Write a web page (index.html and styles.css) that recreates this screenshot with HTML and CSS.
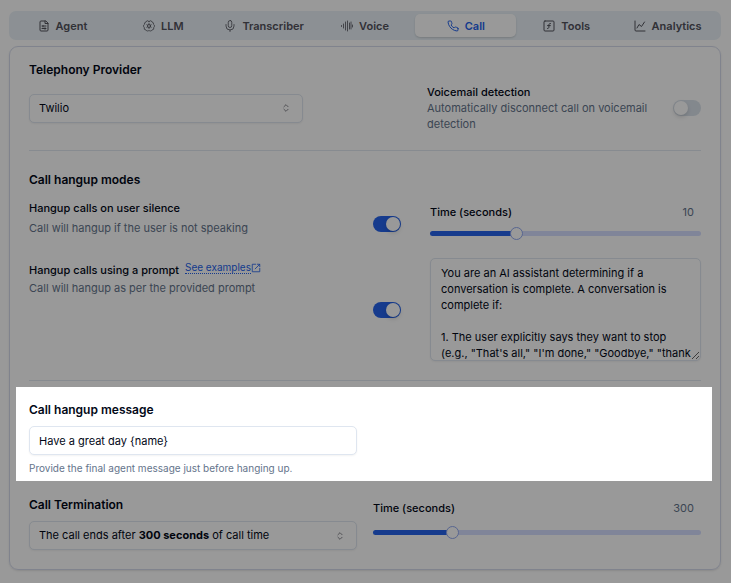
FILE: index.html
```html
<!DOCTYPE html>
<html lang="en">
<head>
    <meta charset="UTF-8">
    <meta name="viewport" content="width=device-width, initial-scale=1.0">
    <title>Agent setup - Call</title>
    <link rel="stylesheet" href="styles.css">
</head>
<body>
<!-- Tabs -->
<nav class="tabs">
    <a class="tab" href="#agent">
        <svg class="icon" viewBox="0 0 24 24"><path d="M15 2H6a2 2 0 0 0-2 2v16a2 2 0 0 0 2 2h12a2 2 0 0 0 2-2V7z"/><path d="M14 2v5h6M8 12h8M10 11v3M8 17h8M14 15.500v3"/></svg>
        Agent
    </a>
    <a class="tab" href="#llm">
        <svg class="icon fine" viewBox="0 0 24 24"><circle cx="12" cy="12" r="3"/><path d="M12 3.500a3 3 0 0 0-5.800.4A4 4 0 0 0 3 8.500 4 4 0 0 0 2.500 15 4 4 0 0 0 6 20a3.500 3.500 0 0 0 6 .5 3.500 3.500 0 0 0 6-.5 4 4 0 0 0 3.500-5 4 4 0 0 0-.5-6.500 4 4 0 0 0-3.200-4.600 3 3 0 0 0-5.800-.4M12 7v2M12 15v2M7.700 9.500l1.700 1M14.600 13.500l1.700 1M7.700 14.500l1.700-1M14.600 10.500l1.700-1"/></svg>
        LLM
    </a>
    <a class="tab" href="#transcriber">
        <svg class="icon fine" viewBox="0 0 24 24"><rect x="8.500" y="1" width="7" height="14" rx="3.500"/><path d="M4 9v3a8 8 0 0 0 16 0V9M12 20v3"/></svg>
        Transcriber
    </a>
    <a class="tab" href="#voice">
        <svg class="icon fine" viewBox="0 0 24 24"><path d="M1 11v2M5 8v8M9 4v16M13 2v20M17 6v12M20 4v14M23 10v4"/></svg>
        Voice
    </a>
    <a class="tab active" href="#call" aria-current="page">
        <svg class="icon" viewBox="0 0 24 24"><path d="M22 16.920v3a2 2 0 0 1-2.180 2 19.790 19.790 0 0 1-8.630-3.070 19.500 19.500 0 0 1-6-6 19.790 19.790 0 0 1-3.070-8.670A2 2 0 0 1 4.110 2h3a2 2 0 0 1 2 1.720 12.840 12.840 0 0 0 .7 2.810 2 2 0 0 1-.45 2.110L8.090 9.910a16 16 0 0 0 6 6l1.270-1.270a2 2 0 0 1 2.110-.45 12.840 12.840 0 0 0 2.810.7A2 2 0 0 1 22 16.920z"/></svg>
        Call
    </a>
    <a class="tab" href="#tools">
        <svg class="icon" viewBox="0 0 24 24"><rect x="2" y="2" width="20" height="20" rx="2"/><path d="M9 17c2 0 2.800-1 2.800-2.800V10c0-2 1-3.300 3.200-3M9 11.200h5.700"/></svg>
        Tools
    </a>
    <a class="tab" href="#analytics">
        <svg class="icon" viewBox="0 0 24 24"><path d="M2 2v18a2 2 0 0 0 2 2h18M6 16l4-7 5 4 6-9"/></svg>
        Analytics
    </a>
</nav>

<main class="card">
    <!-- Telephony provider -->
    <section>
        <h2><label for="provider">Telephony Provider</label></h2>
        <div class="provider-row">
            <div class="select-box">
                <select id="provider">
                    <option>Twilio</option>
                </select>
                <svg class="chevrons" viewBox="0 0 24 24"><path d="M7 9l5-5 5 5M7 15l5 5 5-5"/></svg>
            </div>
            <div class="voicemail">
                <label for="voicemail">
                    <span class="title">Voicemail detection</span>
                    <span class="desc">Automatically disconnect call on voicemail detection</span>
                </label>
                <input class="switch" type="checkbox" role="switch" id="voicemail">
            </div>
        </div>
    </section>

    <hr>

    <!-- Hangup modes -->
    <section class="modes">
        <h2>Call hangup modes</h2>
        <div class="mode">
            <div class="mode-text">
                <label class="title" for="silence">Hangup calls on user silence</label>
                <p class="desc">Call will hangup if the user is not speaking</p>
            </div>
            <div class="mode-control">
                <input class="switch" type="checkbox" role="switch" id="silence" checked>
                <div class="slider">
                    <div class="slider-head">
                        <label class="title" for="silence-time">Time (seconds)</label>
                        <output for="silence-time">10</output>
                    </div>
                    <input type="range" id="silence-time" min="1" max="30" value="10" style="--fill: 32%">
                </div>
            </div>
        </div>
        <div class="mode">
            <div class="mode-text prompt-text">
                <div class="title-row">
                    <label class="title" for="prompt-switch">Hangup calls using a prompt</label>
                    <a class="examples" href="#examples"><span>See examples</span><svg viewBox="0 0 24 24"><path d="M11 3H3v18h18v-8M15 3h6v6M10 14L21 3"/></svg></a>
                </div>
                <p class="desc">Call will hangup as per the provided prompt</p>
            </div>
            <div class="mode-control">
                <input class="switch" type="checkbox" role="switch" id="prompt-switch" checked>
                <textarea aria-label="Hangup prompt">You are an AI assistant determining if a conversation is complete. A conversation is complete if:

1. The user explicitly says they want to stop
(e.g., "That's all," "I'm done," "Goodbye," "thank you").</textarea>
            </div>
        </div>
    </section>

    <hr>

    <!-- Hangup message, dims everything around it -->
    <section class="spotlight">
        <h2><label for="message">Call hangup message</label></h2>
        <div class="columns">
            <input type="text" id="message" value="Have a great day {name}">
        </div>
        <p class="help">Provide the final agent message just before hanging up.</p>
    </section>

    <!-- Termination -->
    <section class="columns termination">
        <div>
            <h2><label for="termination">Call Termination</label></h2>
            <div class="select-box">
                <select id="termination" class="rich">
                    <button><selectedcontent></selectedcontent></button>
                    <option>The call ends after <b>300 seconds</b> of call time</option>
                </select>
                <svg class="chevrons" viewBox="0 0 24 24"><path d="M7 9l5-5 5 5M7 15l5 5 5-5"/></svg>
            </div>
        </div>
        <div class="slider">
            <div class="slider-head">
                <label class="title" for="end-time">Time (seconds)</label>
                <output for="end-time">300</output>
            </div>
            <input type="range" id="end-time" min="30" max="1200" value="300" step="30" style="--fill: 24%">
        </div>
    </section>
</main>
</body>
</html>
```

FILE: styles.css
```css
* {
    box-sizing: border-box;
}

body {
    margin: 0;
    padding: 11px 10px 13px 9px;
    font-family: Inter, "Liberation Sans", sans-serif;
    font-size: 11px;
    line-height: 16px;
    color: #020817;
    background-color: #fff;
    overflow-x: hidden;
}

h2,
p {
    margin: 0;
}

h2 {
    font-size: 12px;
    font-weight: 600;
    line-height: 20px;
}

hr {
    margin: 18px 0 19px;
    border: 0;
    border-top: 1px solid #e2e8f0;
}

svg {
    fill: none;
    stroke: currentColor;
    stroke-width: 2;
    stroke-linecap: round;
    stroke-linejoin: round;
}

/* Tabs */
.tabs {
    display: grid;
    grid-template-columns: repeat(7, 1fr);
    padding: 3px;
    border-radius: 7px;
    background-color: #e9f1f7;
}

.tab {
    display: flex;
    align-items: center;
    justify-content: center;
    gap: 6px;
    height: 23px;
    border-radius: 5px;
    font-weight: 600;
    color: #52525b;
    text-decoration: none;
}

.tab.active {
    color: #2563eb;
    background-color: #fff;
    box-shadow: 0 1px 2px rgba(0, 0, 0, 0.15);
}

.icon {
    width: 12px;
    height: 12px;
}

.icon.fine {
    stroke-width: 1.6;
}

/* Card */
.card {
    margin-top: 6px;
    padding: 13px 19px 19px;
    border: 1px solid #d6dbec;
    border-radius: 9px;
    box-shadow: 0 1px 2px rgba(0, 0, 0, 0.1);
}

.title {
    font-weight: 500;
}

.desc {
    color: #64748b;
}

.columns {
    display: grid;
    grid-template-columns: 1fr 1fr;
    column-gap: 16px;
}

/* Form controls */
select,
textarea,
input[type="text"] {
    width: 100%;
    padding: 0 9px;
    border: 1px solid #dfe6f0;
    border-radius: 5px;
    font: inherit;
    color: inherit;
    background-color: #fff;
    box-shadow: 0 1px 2px rgba(0, 0, 0, 0.05);
}

select,
input[type="text"] {
    height: 29px;
}

select {
    appearance: none;
}

select.rich {
    appearance: base-select;
    display: flex;
    align-items: center;
    line-height: 27px;
}

select.rich::picker-icon {
    display: none;
}

.select-box {
    display: grid;
    align-items: center;
}

.select-box > * {
    grid-area: 1 / 1;
}

.chevrons {
    justify-self: end;
    width: 10px;
    height: 10px;
    margin-right: 12px;
    color: #71717a;
    pointer-events: none;
}

textarea {
    display: block;
    height: 103px;
    padding: 6px 2px 6px 10px;
    resize: both;
    overflow: hidden;
}

.switch {
    appearance: none;
    flex: none;
    width: 28px;
    height: 16px;
    margin: 0;
    padding: 1px;
    border-radius: 8px;
    background-color: #dbe3ec;
}

.switch::before {
    content: "";
    display: block;
    width: 14px;
    height: 14px;
    border-radius: 50%;
    background-color: #fff;
    box-shadow: 0 2px 4px rgba(0, 0, 0, 0.15);
}

.switch:checked {
    background-color: #2563eb;
}

.switch:checked::before {
    margin-left: auto;
}

.slider {
    flex: 1;
}

.slider-head {
    display: flex;
    justify-content: space-between;
    padding-right: 7px;
}

.slider output {
    color: #64748b;
}

input[type="range"] {
    appearance: none;
    display: block;
    width: 100%;
    height: 13px;
    margin: 7px 0 0;
    background: none;
}

input[type="range"]::-webkit-slider-runnable-track {
    height: 5px;
    border-radius: 3px;
    background: linear-gradient(to right, #2563eb var(--fill), #d6deff var(--fill));
}

input[type="range"]::-webkit-slider-thumb {
    appearance: none;
    width: 13px;
    height: 13px;
    margin-top: -4px;
    border: 1px solid #92a9f0;
    border-radius: 50%;
    background-color: #fff;
}

/* Telephony provider */
.provider-row {
    display: grid;
    grid-template-columns: repeat(2, minmax(0, 274px));
    justify-content: space-between;
    align-items: center;
    margin-top: 4px;
}

.voicemail {
    display: flex;
    align-items: center;
    gap: 20px;
}

.voicemail label {
    flex: 1;
}

.voicemail span {
    display: block;
}

/* Hangup modes */
.modes {
    display: grid;
    gap: 10px;
    padding-bottom: 1px;
}

.mode {
    display: grid;
    grid-template-columns: 1fr 1fr;
    column-gap: 16px;
}

.mode-text {
    display: flex;
    flex-direction: column;
    gap: 4px;
}

.prompt-text {
    gap: 2px;
    padding-top: 4px;
}

.title-row {
    display: flex;
    gap: 6px;
}

.examples {
    display: flex;
    align-items: center;
    height: 11px;
    font-size: 10px;
    line-height: 11px;
    color: #2563eb;
    text-decoration: none;
}

.examples span {
    border-bottom: 1px dotted #2563eb;
}

.examples svg {
    width: 10px;
    height: 10px;
}

.mode-control {
    display: flex;
    align-items: center;
    gap: 29px;
}

.mode-control .slider {
    padding: 4px 0 8px;
}

.mode-control textarea {
    flex: 1;
    width: 0;
}

/* Hangup message */
.spotlight {
    position: relative;
    margin: -13px -11px 14px -13px;
    padding: 13px 11px 6px 13px;
    box-shadow: 0 0 0 200vmax rgba(0, 0, 0, 0.4);
}

.spotlight .columns {
    margin: 6px 0;
}

.help {
    font-size: 10px;
    line-height: 14px;
    color: #64748b;
}

/* Termination */
.termination .select-box {
    margin-top: 6px;
}

.termination .slider {
    padding-top: 5px;
}

.termination input[type="range"] {
    margin-top: 10px;
}
```
